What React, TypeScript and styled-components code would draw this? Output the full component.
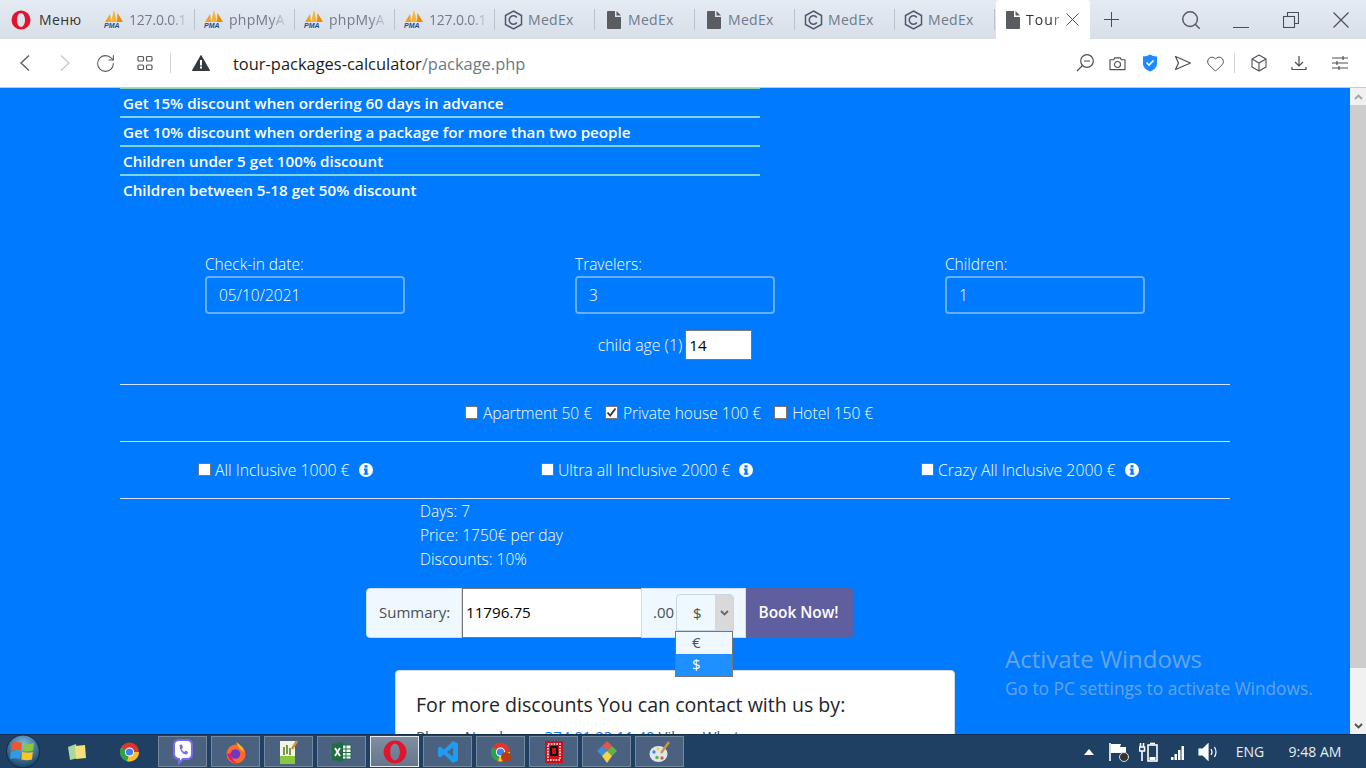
import React from 'react';
import styled, { createGlobalStyle } from 'styled-components';
import { Heart, RotateCw, Search } from 'lucide-react';

const GlobalStyle = createGlobalStyle`
  html, body {
    margin: 0;
    padding: 0;
    overflow: hidden;
  }
  * {
    box-sizing: border-box;
  }
  body {
    font-family: "Open Sans", "Noto Sans", sans-serif;
  }
`;

const Page = styled.div`
  width: 1366px;
  height: 768px;
  position: relative;
  display: flex;
  flex-direction: column;
  overflow: hidden;
`;

/* browser chrome */
const TabStrip = styled.div`
  height: 39px;
  flex: none;
  display: flex;
  align-items: stretch;
  background: linear-gradient(#e4ebf3, #d8dfe8);
`;

const MenuTab = styled.div`
  width: 100px;
  padding-left: 11px;
  display: flex;
  align-items: center;
  gap: 8px;
  font-size: 14px;
  letter-spacing: 0.4px;
  color: #333;
`;

const Tab = styled.div`
  width: 95px;
  margin-right: 5px;
  margin-top: 9px;
  margin-bottom: 9px;
  padding-left: 4px;
  border-right: 1px solid #b9c3cf;
  display: flex;
  align-items: center;
  gap: 5px;
  font-size: 14px;
  color: #6f7c8c;
`;

const TabLabel = styled.span<{ $tight?: boolean; $fade?: boolean }>`
  white-space: nowrap;
  letter-spacing: ${(p) => (p.$tight ? '-0.2px' : '0.3px')};
  ${(p) =>
    p.$fade &&
    `
    -webkit-mask-image: linear-gradient(90deg, #000 72%, rgba(0, 0, 0, 0.2));
    mask-image: linear-gradient(90deg, #000 72%, rgba(0, 0, 0, 0.2));
  `}
`;

const ActiveTab = styled.div`
  width: 94px;
  margin-left: -4px;
  padding-left: 7px;
  background: #fff;
  border-radius: 3px 3px 0 0;
  display: flex;
  align-items: center;
  gap: 4px;
  font-size: 14px;
  letter-spacing: 1px;
  color: #333;
`;

const ActiveLabel = styled.span`
  width: 36px;
  white-space: nowrap;
  -webkit-mask-image: linear-gradient(90deg, #000 70%, rgba(0, 0, 0, 0.3));
  mask-image: linear-gradient(90deg, #000 70%, rgba(0, 0, 0, 0.3));
`;

const NewTab = styled.div`
  width: 42px;
  display: flex;
  align-items: center;
  justify-content: center;
`;

const WindowControls = styled.div`
  margin-left: auto;
  display: flex;
  align-items: center;
  color: #55595f;
`;

const WindowButton = styled.div`
  width: 50px;
  height: 39px;
  display: flex;
  align-items: center;
  justify-content: center;
`;

const AddressBar = styled.div`
  height: 49px;
  flex: none;
  background: #fff;
  border-bottom: 1px solid #c3cad2;
  display: flex;
  align-items: center;
  padding-left: 20px;
  padding-right: 2px;
  color: #55595f;
`;

const NavButton = styled.div<{ $w: number; $pad?: number; $faded?: boolean }>`
  width: ${(p) => p.$w}px;
  padding-left: ${(p) => p.$pad ?? 0}px;
  flex: none;
  display: flex;
  align-items: center;
  color: ${(p) => (p.$faded ? '#c4c8cc' : '#55595f')};
`;

const BarDivider = styled.div`
  width: 1px;
  height: 20px;
  flex: none;
  background: #cfd2d6;
`;

const Url = styled.div`
  margin-left: 22px;
  font-size: 16.45px;
  color: #1c1c1c;
  white-space: nowrap;
`;

const UrlPath = styled.span`
  color: #6b7885;
`;

const BarTools = styled.div`
  margin-left: auto;
  display: flex;
  align-items: center;
  color: #4a4f57;
`;

const BarTool = styled.div<{ $w: number }>`
  width: ${(p) => p.$w}px;
  display: flex;
  align-items: center;
  justify-content: center;
`;

/* page */
const Body = styled.div`
  flex: 1;
  min-height: 0;
  display: flex;
`;

const Viewport = styled.div`
  flex: 1;
  min-width: 0;
  overflow: hidden;
  background: #007bff;
  color: #fff;
  font-size: 15.5px;
  font-weight: 300;
  line-height: 24px;
  padding: 0 120px;
`;

const Scrollbar = styled.div`
  width: 16px;
  flex: none;
  background: #f1f1f1;
  display: flex;
  flex-direction: column;
  color: #a3a3a3;
`;

const ScrollButton = styled.div<{ $dark?: boolean }>`
  height: 17px;
  flex: none;
  display: flex;
  align-items: center;
  justify-content: center;
  color: ${(p) => (p.$dark ? '#505050' : '#a3a3a3')};
`;

const ScrollThumb = styled.div`
  height: 563px;
  flex: none;
  background: #cdcdcd;
`;

const ScrollTrack = styled.div`
  flex: 1;
`;

const DiscountList = styled.ul`
  list-style: none;
  margin: 0;
  padding: 0;
  width: 640px;
  border-top: 1px solid #8ed1b8;
`;

const DiscountItem = styled.li`
  height: 29px;
  padding-left: 3px;
  font-size: 15.2px;
  font-weight: 550;
  line-height: 29px;
  border-bottom: 2px solid #7fd6d6;
  white-space: nowrap;
  &:last-child {
    border-bottom: 0;
  }
`;

const FormGrid = styled.div`
  margin-top: 47px;
  display: grid;
  grid-template-columns: repeat(3, 1fr);
`;

const Field = styled.div`
  width: 200px;
  justify-self: center;
`;

const FieldLabel = styled.label`
  display: block;
  line-height: 24px;
`;

const FieldInput = styled.input`
  display: block;
  width: 200px;
  height: 38px;
  padding: 0 12px;
  border: 2px solid #66b0ff;
  border-radius: 4px;
  background: transparent;
  color: #fff;
  font: inherit;
`;

const ChildRow = styled.div`
  margin-top: 16px;
  height: 30px;
  font-size: 15.8px;
  display: flex;
  justify-content: center;
  align-items: center;
  gap: 3px;
`;

const ChildInput = styled.input`
  width: 67px;
  height: 30px;
  padding: 0 3px;
  border: 1px solid #767676;
  background: #fff;
  color: #000;
  font: inherit;
  font-size: 15.2px;
  font-weight: 400;
`;

const Rule = styled.hr<{ $top?: number }>`
  margin: ${(p) => p.$top ?? 0}px 0 0;
  border: 0;
  border-top: 1px solid #cfe5ff;
`;

const RoomRow = styled.div`
  height: 56px;
  padding-right: 12px;
  display: flex;
  justify-content: center;
  align-items: center;
  gap: 13px;
`;

const MealRow = styled.div`
  height: 56px;
  font-size: 15.8px;
  display: grid;
  grid-template-columns: repeat(3, 1fr);
  align-items: center;
`;

const Option = styled.label<{ $indent?: number; $gap: number }>`
  display: flex;
  align-items: center;
  gap: ${(p) => p.$gap}px;
  padding-left: ${(p) => p.$indent ?? 0}px;
  white-space: nowrap;
`;

const Box = styled.span`
  width: 13px;
  height: 13px;
  flex: none;
  margin-top: -2px;
  background: #fff;
  border: 1px solid #767676;
  display: flex;
  align-items: center;
  justify-content: center;
`;

const InfoIcon = styled.span`
  margin-left: 5px;
  display: flex;
`;

const Stats = styled.div`
  margin-left: 300px;
`;

const Summary = styled.div`
  margin: 17px 0 0 246px;
  width: 487px;
  height: 50px;
  font-size: 15px;
  font-weight: 400;
  display: flex;
  position: relative;
`;

const AddOn = styled.div<{ $w: number; $left?: boolean }>`
  width: ${(p) => p.$w}px;
  flex: none;
  background: #eff7ff;
  border: 1px solid #cfdceb;
  border-radius: ${(p) => (p.$left ? '4px 0 0 4px' : '0')};
  color: #495057;
  display: flex;
  align-items: center;
`;

const SummaryLabel = styled.span`
  padding-left: 12px;
  margin-top: -2px;
`;

const Cents = styled.span`
  padding-left: 11px;
  margin-right: 2px;
  margin-top: -2px;
`;

const SummaryInput = styled.input`
  width: 179px;
  flex: none;
  padding: 0 3px 2px;
  border: 1px solid #767676;
  border-right: 0;
  background: #fff;
  color: #000;
  font: inherit;
  font-size: 15.2px;
`;

const CurrencySelect = styled.div`
  width: 58px;
  height: 37px;
  margin-top: -1px;
  border: 1px solid #c9d6e4;
  border-radius: 4px 4px 0 0;
  background: #eff7ff;
  display: flex;
  overflow: hidden;
`;

const CurrencyValue = styled.div`
  flex: 1;
  display: flex;
  align-items: center;
  padding-left: 16px;
`;

const CurrencyArrow = styled.div`
  width: 18px;
  background: #d9d9d9;
  color: #666;
  display: flex;
  align-items: center;
  justify-content: center;
`;

const CurrencyMenu = styled.div`
  position: absolute;
  left: 309px;
  top: 43px;
  width: 58px;
  border: 1px solid #767676;
  background: #eff7ff;
  color: #495057;
  z-index: 2;
`;

const CurrencyOption = styled.div<{ $active?: boolean }>`
  height: 22px;
  line-height: 21px;
  padding-left: 16px;
  background: ${(p) => (p.$active ? '#1e90ff' : 'transparent')};
  color: ${(p) => (p.$active ? '#fff' : '#495057')};
`;

const BookButton = styled.button`
  width: 107px;
  flex: none;
  padding: 0 2px 0 0;
  border: 0;
  border-radius: 0 4px 4px 0;
  background: #5f5f9f;
  color: #fff;
  font: inherit;
  font-size: 15.4px;
  font-weight: 550;
`;

const ContactCard = styled.div`
  margin: 32px 0 0 275px;
  width: 560px;
  height: 200px;
  padding: 21px 20px;
  background: #fff;
  border: 1px solid #d5dbe1;
  border-radius: 4px;
  color: #212529;
`;

const ContactTitle = styled.h5`
  margin: 0 0 6px;
  font-size: 19.6px;
  font-weight: 500;
  line-height: 26px;
`;

const ContactLine = styled.p`
  margin: 0;
  font-size: 15px;
  font-weight: 400;
  color: #495057;
`;

const ContactLink = styled.a`
  margin-left: 10px;
  color: #007bff;
`;

const Watermark = styled.div`
  position: absolute;
  left: 1005px;
  top: 643px;
  color: rgba(205, 205, 205, 0.5);
  pointer-events: none;
  white-space: nowrap;
`;

const WatermarkTitle = styled.div`
  font-size: 24px;
  line-height: 32px;
`;

const WatermarkText = styled.div`
  margin-top: 1px;
  font-size: 17.3px;
  line-height: 26px;
`;

/* taskbar */
const Taskbar = styled.div`
  height: 34px;
  flex: none;
  background: #1f3f63;
  border-top: 1px solid #14304e;
  display: flex;
  align-items: center;
  color: #e8edf3;
`;

const StartOrb = styled.div`
  width: 52px;
  padding-left: 4px;
  display: flex;
`;

const PinnedIcon = styled.div<{ $w: number }>`
  width: ${(p) => p.$w}px;
  flex: none;
  display: flex;
  justify-content: center;
`;

const TaskButton = styled.div<{ $active?: boolean }>`
  width: 49px;
  height: 31px;
  margin-right: 4px;
  flex: none;
  display: flex;
  align-items: center;
  justify-content: center;
  border: 1px solid ${(p) => (p.$active ? '#e6ebf1' : '#76889c')};
  background: ${(p) => (p.$active ? 'linear-gradient(#7f8ea1, #66778c)' : '#4a6280')};
`;

const Tray = styled.div`
  margin-left: auto;
  display: flex;
  align-items: center;
  font-size: 14px;
`;

const TrayItem = styled.div<{ $w: number }>`
  width: ${(p) => p.$w}px;
  display: flex;
  justify-content: center;
  align-items: center;
`;

/* drawings */
const OperaIcon = ({ size = 20 }: { size?: number }) => (
  <svg width={size} height={size} viewBox="0 0 20 20">
    <path
      fillRule="evenodd"
      d="M10 0.5 A9.5 9.5 0 1 0 10 19.5 A9.5 9.5 0 1 0 10 0.5 Z M10 3 C12.2 3 14 6.1 14 10 C14 13.9 12.2 17 10 17 C7.8 17 6 13.9 6 10 C6 6.1 7.8 3 10 3 Z"
      fill="#e3132b"
    />
  </svg>
);

const PmaIcon = () => (
  <svg width="20" height="20" viewBox="0 0 20 20">
    <path d="M1 12 L6 4 L7 12 Z" fill="#f7a11a" />
    <path d="M7 12 L10 0 L13 12 Z" fill="#f9b233" />
    <path d="M13 12 L13.5 3 L19 12 Z" fill="#f08a00" />
    <text x="0" y="18" fontSize="7" fontWeight="700" fontStyle="italic" fill="#2a4b8d" fontFamily="Liberation Sans">PMA</text>
  </svg>
);

const HexIcon = () => (
  <svg width="19" height="20" viewBox="0 0 19 20" fill="none" stroke="#4d5a6c">
    <path d="M9.5 1 L17.5 5.5 V14.5 L9.5 19 L1.5 14.5 V5.5 Z" strokeWidth="1.5" />
    <path d="M12.8 7.5 A4.2 4.2 0 1 0 12.8 12.5" strokeWidth="1.5" />
  </svg>
);

const DocIcon = () => (
  <svg width="19" height="18" viewBox="-3 0 19 18">
    <path d="M1 0 H8 V6 H14 V17 Q14 18 13 18 H1 Q0 18 0 17 V1 Q0 0 1 0 Z" fill="#5a5c60" />
    <path d="M9.5 0 L14 4.5 H9.5 Z" fill="#5a5c60" />
  </svg>
);

const CrossIcon = ({ size }: { size: number }) => (
  <svg width={size} height={size} viewBox="0 0 16 16" fill="none" stroke="#4a4f57" strokeWidth="1.2">
    <path d="M0.5 0.5 L15.5 15.5 M15.5 0.5 L0.5 15.5" />
  </svg>
);

const PlusIcon = () => (
  <svg width="15" height="15" viewBox="0 0 15 15" fill="none" stroke="#4a4f57">
    <path d="M0 7.5 H15 M7.5 0 V15" />
  </svg>
);

const BackIcon = ({ flip }: { flip?: boolean }) => (
  <svg width="10" height="16" viewBox="0 0 10 16" fill="none" stroke="currentColor" strokeWidth="1.3">
    <path d={flip ? 'M1 0.5 L9 8 L1 15.5' : 'M9 0.5 L1 8 L9 15.5'} />
  </svg>
);

const WarningIcon = () => (
  <svg width="18" height="16" viewBox="0 0 18 16">
    <path d="M9 0.5 L17.6 15.5 H0.4 Z" fill="#33393f" stroke="#33393f" strokeLinejoin="round" />
    <rect x="8" y="5" width="2" height="5.5" fill="#fff" />
    <rect x="8" y="11.5" width="2" height="2" fill="#fff" />
  </svg>
);

const GridIcon = () => (
  <svg width="16" height="16" viewBox="0 0 16 16" fill="none" stroke="#55595f" strokeWidth="1.2">
    <rect x="1" y="1.5" width="5.5" height="4.5" rx="1" />
    <rect x="9.5" y="1.5" width="5.5" height="4.5" rx="1" />
    <rect x="1" y="10" width="5.5" height="4.5" rx="1" />
    <rect x="9.5" y="10" width="5.5" height="4.5" rx="1" />
  </svg>
);

const ZoomOutIcon = () => (
  <svg width="18" height="18" viewBox="0 0 18 18" fill="none" stroke="#4a4f57" strokeWidth="1.2">
    <circle cx="11" cy="7" r="6.3" />
    <path d="M8 7 H14 M6.5 11.5 L1 17" />
  </svg>
);

const CameraIcon = () => (
  <svg width="17" height="15" viewBox="0 0 18 16" fill="none" stroke="#4a4f57" strokeWidth="1.2">
    <path d="M1 4 H5 L6 2 H12 L13 4 H17 V14.5 H1 Z" strokeLinejoin="round" />
    <circle cx="9" cy="9" r="3.2" />
  </svg>
);

const ShieldIcon = () => (
  <svg width="16" height="18" viewBox="0 0 16 18">
    <path d="M8 0.5 Q11 2.5 15 2.5 V10 Q15 14.5 8 17.5 Q1 14.5 1 10 V2.5 Q5 2.5 8 0.5 Z" fill="#1a8cff" />
    <path d="M4.5 8.5 L7 11 L11.5 6.5" fill="none" stroke="#fff" strokeWidth="1.6" />
  </svg>
);

const SendIcon = () => (
  <svg width="18" height="16" viewBox="0 0 18 16" fill="none" stroke="#4a4f57" strokeWidth="1.2">
    <path d="M1.5 1.5 L16.5 8 L1.5 14.5 L4.5 8 Z" strokeLinejoin="round" />
  </svg>
);

const CubeIcon = () => (
  <svg width="16" height="18" viewBox="0 0 16 18" fill="none" stroke="#4a4f57" strokeWidth="1.1">
    <path d="M8 1 L15 5 V13 L8 17 L1 13 V5 Z M1 5 L8 9 L15 5 M8 9 V17" strokeLinejoin="round" />
  </svg>
);

const DownloadIcon = () => (
  <svg width="16" height="16" viewBox="0 0 16 16" fill="none" stroke="#4a4f57" strokeWidth="1.2">
    <path d="M8 1 V10.5 M4 7 L8 11 L12 7 M1 12 V14.5 H15 V12" />
  </svg>
);

const SlidersIcon = () => (
  <svg width="16" height="16" viewBox="0 0 16 16" fill="none" stroke="#4a4f57" strokeWidth="1.2">
    <path d="M0 3 H16 M0 8 H16 M0 13 H16 M11 1 V5 M5 6 V10 M7 11 V15" />
  </svg>
);

const MinimizeIcon = () => (
  <svg width="16" height="16" viewBox="0 0 16 16" fill="none" stroke="#4a4f57" strokeWidth="1">
    <path d="M0 15.5 H16" />
  </svg>
);

const RestoreIcon = () => (
  <svg width="16" height="16" viewBox="0 0 16 16" fill="none" stroke="#4a4f57" strokeWidth="1.1">
    <rect x="0.5" y="4.5" width="11" height="11" />
    <path d="M4.5 4.5 V0.5 H15.5 V11.5 H11.5" />
  </svg>
);

const InfoCircle = () => (
  <svg width="14" height="14" viewBox="0 0 14 14">
    <circle cx="7" cy="7" r="7" fill="#fff" />
    <rect x="5.5" y="2.2" width="3" height="2.4" fill="#007bff" />
    <path d="M4.8 5.6 H8.5 V10.2 H9.4 V11.8 H4.8 V10.2 H5.7 V7.2 H4.8 Z" fill="#007bff" />
  </svg>
);

const Tick = () => (
  <svg width="11" height="11" viewBox="0 0 11 11" fill="none" stroke="#333" strokeWidth="1.8">
    <path d="M1.5 5.5 L4.2 8.5 L9.5 1.5" />
  </svg>
);

const Chevron = ({ up }: { up?: boolean }) => (
  <svg width="9" height="6" viewBox="0 0 9 6" fill="none" stroke="currentColor" strokeWidth="1.8">
    <path d={up ? 'M1 5 L4.5 1.5 L8 5' : 'M1 1 L4.5 4.5 L8 1'} />
  </svg>
);

const WindowsOrb = () => (
  <svg width="38" height="33" viewBox="0 0 38 33">
    <defs>
      <radialGradient id="orb" cx="50%" cy="30%" r="70%">
        <stop offset="0%" stopColor="#7fc0e6" />
        <stop offset="100%" stopColor="#17405f" />
      </radialGradient>
    </defs>
    <circle cx="19" cy="16.5" r="16.5" fill="url(#orb)" stroke="#0c2a44" />
    <path d="M8 8 Q13 6 18 8 L17 15.5 Q12 14 7 15.5 Z" fill="#f0562d" />
    <path d="M19.5 8.5 Q25 10 30 8 L29 15.5 Q24 17 18.5 15.5 Z" fill="#8cc63f" />
    <path d="M6.8 16.5 Q12 15 16.8 16.5 L15.8 24 Q11 22.5 6 24 Z" fill="#2f9be8" />
    <path d="M18.2 17 Q24 18.5 28.8 17 L28 24.5 Q23 26 17.3 24.5 Z" fill="#fdc325" />
  </svg>
);

const ExplorerIcon = () => (
  <svg width="22" height="22" viewBox="0 0 22 22">
    <path d="M2 6 L10 3 L12 17 L4 19 Z" fill="#a8d8a0" />
    <path d="M9 5 L19 4 L20 17 L10 18 Z" fill="#f4df7a" />
  </svg>
);

const ChromeIcon = ({ badge }: { badge?: boolean }) => (
  <svg width="22" height="22" viewBox="0 0 22 22">
    <circle cx="10.5" cy="11" r="9.5" fill="#e0352b" />
    <path d="M10.5 11 L2.3 6.2 A9.5 9.5 0 0 0 8 20.2 Z" fill="#2ba24c" />
    <path d="M10.5 11 L20 11 A9.5 9.5 0 0 1 8 20.2 Z" fill="#fbc02d" />
    <circle cx="10.5" cy="11" r="4.6" fill="#fff" />
    <circle cx="10.5" cy="11" r="3.6" fill="#3b82f0" />
    {badge && <circle cx="16" cy="16" r="5" fill="#b83a12" />}
  </svg>
);

const ViberIcon = () => (
  <svg width="20" height="26" viewBox="0 0 20 26">
    <path d="M6 1 H14 Q19 1 19 6 V15 Q19 20 14 20 H10 L6 24 V20 Q1 19 1 15 V6 Q1 1 6 1 Z" fill="#fff" stroke="#7a6be8" strokeWidth="2" />
    <path d="M6.5 6 L9 5.5 L10 9 L8.5 10 Q9.5 12.5 11.5 13 L12.5 11.5 L15 13 L14 15.5 Q7 15.5 6.5 6 Z" fill="#7a6be8" />
  </svg>
);

const FirefoxIcon = () => (
  <svg width="22" height="24" viewBox="0 0 22 24">
    <circle cx="11" cy="14" r="9.5" fill="#ff6a2b" />
    <path d="M11 2 Q18 6 19 12 L15 9 Q12 5 11 2 Z" fill="#ffb51f" />
    <circle cx="10.5" cy="14" r="4.8" fill="#6a3bc2" />
    <path d="M2 14 Q4 22 12 23.5 Q6 19 6 13 Z" fill="#e31587" />
  </svg>
);

const NotesIcon = () => (
  <svg width="20" height="26" viewBox="0 0 20 26">
    <rect x="1" y="2" width="15" height="23" fill="#f2f6de" />
    <rect x="1" y="17" width="15" height="8" fill="#8cc63f" />
    <path d="M5 8 V16 M8 6 V15 M11 9 V16" stroke="#4e7a20" strokeWidth="1.5" />
    <path d="M13 10 L18 2" stroke="#c9963c" strokeWidth="2.4" />
  </svg>
);

const ExcelIcon = () => (
  <svg width="20" height="20" viewBox="0 0 20 20">
    <rect x="9" y="3" width="10" height="14" fill="#fff" stroke="#1e6e42" />
    <path d="M9 7 H19 M9 10.5 H19 M9 14 H19 M14 3 V17" stroke="#1e6e42" />
    <path d="M0 2 L11 0 V20 L0 18 Z" fill="#1e6e42" />
    <path d="M3 6 L8 14 M8 6 L3 14" stroke="#fff" strokeWidth="1.8" />
  </svg>
);

const CodeIcon = () => (
  <svg width="22" height="24" viewBox="0 0 22 24">
    <path d="M16 1 L21 3.5 V20.5 L16 23 L7 14.5 L3 17.5 L1 16 V8 L3 6.5 L7 9.5 Z M16 7.5 L10 12 L16 16.5 Z" fill="#1f9cf0" />
  </svg>
);

const ZillaIcon = () => (
  <svg width="20" height="24" viewBox="0 0 20 24">
    <rect x="1" y="1" width="18" height="22" fill="#c8141c" />
    <rect x="4" y="4" width="12" height="16" fill="none" stroke="#fff" strokeWidth="1.6" strokeDasharray="1.6 1.2" />
    <rect x="7" y="7" width="6" height="8" fill="none" stroke="#111" strokeWidth="2" />
  </svg>
);

const DiamondIcon = () => (
  <svg width="22" height="24" viewBox="0 0 22 24">
    <path d="M11 1 L16 6 L11 11 L6 6 Z" fill="#e2574c" />
    <path d="M11 11 L16 6 L21 11 L16 16 Z" fill="#62b246" />
    <path d="M11 11 L6 6 L1 11 L6 16 Z" fill="#3d8fd8" />
    <path d="M11 11 L16 16 L11 23 L6 16 Z" fill="#f7d34a" />
  </svg>
);

const PaletteIcon = () => (
  <svg width="24" height="24" viewBox="0 0 24 24">
    <ellipse cx="10.5" cy="14" rx="9" ry="8" fill="#dfe7ee" />
    <circle cx="6" cy="12" r="1.7" fill="#3d8fd8" />
    <circle cx="9" cy="17.5" r="1.7" fill="#62b246" />
    <circle cx="14" cy="18" r="1.7" fill="#e2574c" />
    <circle cx="10" cy="9" r="1.7" fill="#f7d34a" />
    <path d="M13 13 L21 2" stroke="#c9963c" strokeWidth="2.4" />
  </svg>
);

const FlagIcon = () => (
  <svg width="20" height="20" viewBox="0 0 20 20">
    <path d="M1 1 V19" stroke="#fff" strokeWidth="1.6" />
    <path d="M2 2 H12 L11 5 H17 V11 H2 Z" fill="#fff" />
    <circle cx="15" cy="15" r="4.5" fill="#333" stroke="#ddd" />
  </svg>
);

const BatteryIcon = () => (
  <svg width="20" height="20" viewBox="0 0 20 20" fill="none" stroke="#fff" strokeWidth="1.6">
    <path d="M1.5 1 V5 M4.5 1 V5 M0.5 5 H5.5 V9 H0.5 Z M3 9 V19" />
    <rect x="9" y="3" width="9" height="16" />
    <path d="M11 1.5 H16" />
    <rect x="10.5" y="15" width="6" height="3" fill="#fff" stroke="none" />
  </svg>
);

const SignalIcon = () => (
  <svg width="16" height="18" viewBox="0 0 16 18" fill="#fff">
    <rect x="0" y="14" width="2.5" height="3" />
    <rect x="3.5" y="11" width="2.5" height="6" />
    <rect x="7" y="7" width="2.5" height="10" />
    <rect x="10.5" y="3" width="2.5" height="14" />
  </svg>
);

const SpeakerIcon = () => (
  <svg width="22" height="18" viewBox="0 0 22 18" fill="none" stroke="#fff" strokeWidth="1.2">
    <path d="M1 6 H5 L10 1 V17 L5 12 H1 Z" fill="#fff" />
    <path d="M13 6 Q15 9 13 12 M16.5 4 Q19.5 9 16.5 14" />
  </svg>
);

const TrayArrow = () => (
  <svg width="10" height="6" viewBox="0 0 10 6">
    <path d="M0 6 L5 0 L10 6 Z" fill="#fff" />
  </svg>
);

const tabs = [
  { icon: <PmaIcon />, label: '127.0.0.1', tight: true, fade: true },
  { icon: <PmaIcon />, label: 'phpMyA', fade: true },
  { icon: <PmaIcon />, label: 'phpMyA', fade: true },
  { icon: <PmaIcon />, label: '127.0.0.1', tight: true, fade: true },
  { icon: <HexIcon />, label: 'MedEx' },
  { icon: <DocIcon />, label: 'MedEx' },
  { icon: <DocIcon />, label: 'MedEx' },
  { icon: <HexIcon />, label: 'MedEx' },
  { icon: <HexIcon />, label: 'MedEx' },
];

const discounts = [
  'Get 15% discount when ordering 60 days in advance',
  'Get 10% discount when ordering a package for more than two people',
  'Children under 5 get 100% discount',
  'Children between 5-18 get 50% discount',
];

const fields = [
  { label: 'Check-in date:', value: '05/10/2021' },
  { label: 'Travelers:', value: '3' },
  { label: 'Children:', value: '1' },
];

const rooms = [
  { label: 'Apartment 50 €' },
  { label: 'Private house 100 €', checked: true },
  { label: 'Hotel 150 €' },
];

const meals = [
  { label: 'All Inclusive 1000 €', indent: 78 },
  { label: 'Ultra all Inclusive 2000 €', indent: 51 },
  { label: 'Crazy All Inclusive 2000 €', indent: 61 },
];

const taskIcons = [
  <ViberIcon key="viber" />,
  <FirefoxIcon key="firefox" />,
  <NotesIcon key="notes" />,
  <ExcelIcon key="excel" />,
  <OperaIcon key="opera" size={24} />,
  <CodeIcon key="code" />,
  <ChromeIcon key="chrome" badge />,
  <ZillaIcon key="zilla" />,
  <DiamondIcon key="diamond" />,
  <PaletteIcon key="palette" />,
];

export default function App(): JSX.Element {
  return (
    <Page>
      <GlobalStyle />
      <TabStrip>
        <MenuTab>
          <OperaIcon />
          Меню
        </MenuTab>
        {tabs.map((tab, i) => (
          <Tab key={i}>
            {tab.icon}
            <TabLabel $tight={tab.tight} $fade={tab.fade}>
              {tab.label}
            </TabLabel>
          </Tab>
        ))}
        <ActiveTab>
          <DocIcon />
          <ActiveLabel>Tour</ActiveLabel>
          <CrossIcon size={13} />
        </ActiveTab>
        <NewTab>
          <PlusIcon />
        </NewTab>
        <WindowControls>
          <WindowButton>
            <Search size={22} strokeWidth={1.6} />
          </WindowButton>
          <WindowButton>
            <MinimizeIcon />
          </WindowButton>
          <WindowButton>
            <RestoreIcon />
          </WindowButton>
          <WindowButton>
            <CrossIcon size={16} />
          </WindowButton>
        </WindowControls>
      </TabStrip>

      <AddressBar>
        <NavButton $w={40}>
          <BackIcon />
        </NavButton>
        <NavButton $w={35} $faded>
          <BackIcon flip />
        </NavButton>
        <NavButton $w={42}>
          <RotateCw size={21} strokeWidth={1.2} />
        </NavButton>
        <NavButton $w={33}>
          <GridIcon />
        </NavButton>
        <BarDivider />
        <NavButton $w={40} $pad={21}>
          <WarningIcon />
        </NavButton>
        <Url>
          tour-packages-calculator<UrlPath>/package.php</UrlPath>
        </Url>
        <BarTools>
          <BarTool $w={38}>
            <ZoomOutIcon />
          </BarTool>
          <BarTool $w={26}>
            <CameraIcon />
          </BarTool>
          <BarTool $w={40}>
            <ShieldIcon />
          </BarTool>
          <BarTool $w={26}>
            <SendIcon />
          </BarTool>
          <BarTool $w={38}>
            <Heart size={19} strokeWidth={1.2} />
          </BarTool>
          <BarDivider />
          <BarTool $w={47}>
            <CubeIcon />
          </BarTool>
          <BarTool $w={33}>
            <DownloadIcon />
          </BarTool>
          <BarTool $w={49}>
            <SlidersIcon />
          </BarTool>
        </BarTools>
      </AddressBar>

      <Body>
        <Viewport>
          <DiscountList>
            {discounts.map((text) => (
              <DiscountItem key={text}>{text}</DiscountItem>
            ))}
          </DiscountList>

          <FormGrid>
            {fields.map((field) => (
              <Field key={field.label}>
                <FieldLabel>{field.label}</FieldLabel>
                <FieldInput defaultValue={field.value} />
              </Field>
            ))}
          </FormGrid>

          <ChildRow>
            child age (1)
            <ChildInput defaultValue="14" />
          </ChildRow>

          <Rule $top={24} />
          <RoomRow>
            {rooms.map((room) => (
              <Option key={room.label} $gap={5}>
                <Box>{room.checked && <Tick />}</Box>
                {room.label}
              </Option>
            ))}
          </RoomRow>
          <Rule />
          <MealRow>
            {meals.map((meal) => (
              <Option key={meal.label} $indent={meal.indent} $gap={4}>
                <Box />
                {meal.label}
                <InfoIcon>
                  <InfoCircle />
                </InfoIcon>
              </Option>
            ))}
          </MealRow>
          <Rule />

          <Stats>
            <div>Days: 7</div>
            <div>Price: 1750€ per day</div>
            <div>Discounts: 10%</div>
          </Stats>

          <Summary>
            <AddOn $w={96} $left>
              <SummaryLabel>Summary:</SummaryLabel>
            </AddOn>
            <SummaryInput defaultValue="11796.75" />
            <AddOn $w={105}>
              <Cents>.00</Cents>
              <CurrencySelect>
                <CurrencyValue>$</CurrencyValue>
                <CurrencyArrow>
                  <Chevron />
                </CurrencyArrow>
              </CurrencySelect>
            </AddOn>
            <BookButton>Book Now!</BookButton>
            <CurrencyMenu>
              <CurrencyOption>€</CurrencyOption>
              <CurrencyOption $active>$</CurrencyOption>
            </CurrencyMenu>
          </Summary>

          <ContactCard>
            <ContactTitle>For more discounts You can contact with us by:</ContactTitle>
            <ContactLine>
              Phone Number : <ContactLink href="#">374 01 23 11 40</ContactLink> Viber, Whatsapp
            </ContactLine>
          </ContactCard>
        </Viewport>
        <Scrollbar>
          <ScrollButton>
            <Chevron up />
          </ScrollButton>
          <ScrollThumb />
          <ScrollTrack />
          <ScrollButton $dark>
            <Chevron />
          </ScrollButton>
        </Scrollbar>
      </Body>

      <Taskbar>
        <StartOrb>
          <WindowsOrb />
        </StartOrb>
        <PinnedIcon $w={49}>
          <ExplorerIcon />
        </PinnedIcon>
        <PinnedIcon $w={57}>
          <ChromeIcon />
        </PinnedIcon>
        {taskIcons.map((icon, i) => (
          <TaskButton key={i} $active={i === 4}>
            {icon}
          </TaskButton>
        ))}
        <Tray>
          <TrayItem $w={30}>
            <TrayArrow />
          </TrayItem>
          <TrayItem $w={30}>
            <FlagIcon />
          </TrayItem>
          <TrayItem $w={30}>
            <BatteryIcon />
          </TrayItem>
          <TrayItem $w={29}>
            <SignalIcon />
          </TrayItem>
          <TrayItem $w={31}>
            <SpeakerIcon />
          </TrayItem>
          <TrayItem $w={52}>ENG</TrayItem>
          <TrayItem $w={78}>9:48 AM</TrayItem>
          <TrayItem $w={12} />
        </Tray>
      </Taskbar>

      <Watermark>
        <WatermarkTitle>Activate Windows</WatermarkTitle>
        <WatermarkText>Go to PC settings to activate Windows.</WatermarkText>
      </Watermark>
    </Page>
  );
}
